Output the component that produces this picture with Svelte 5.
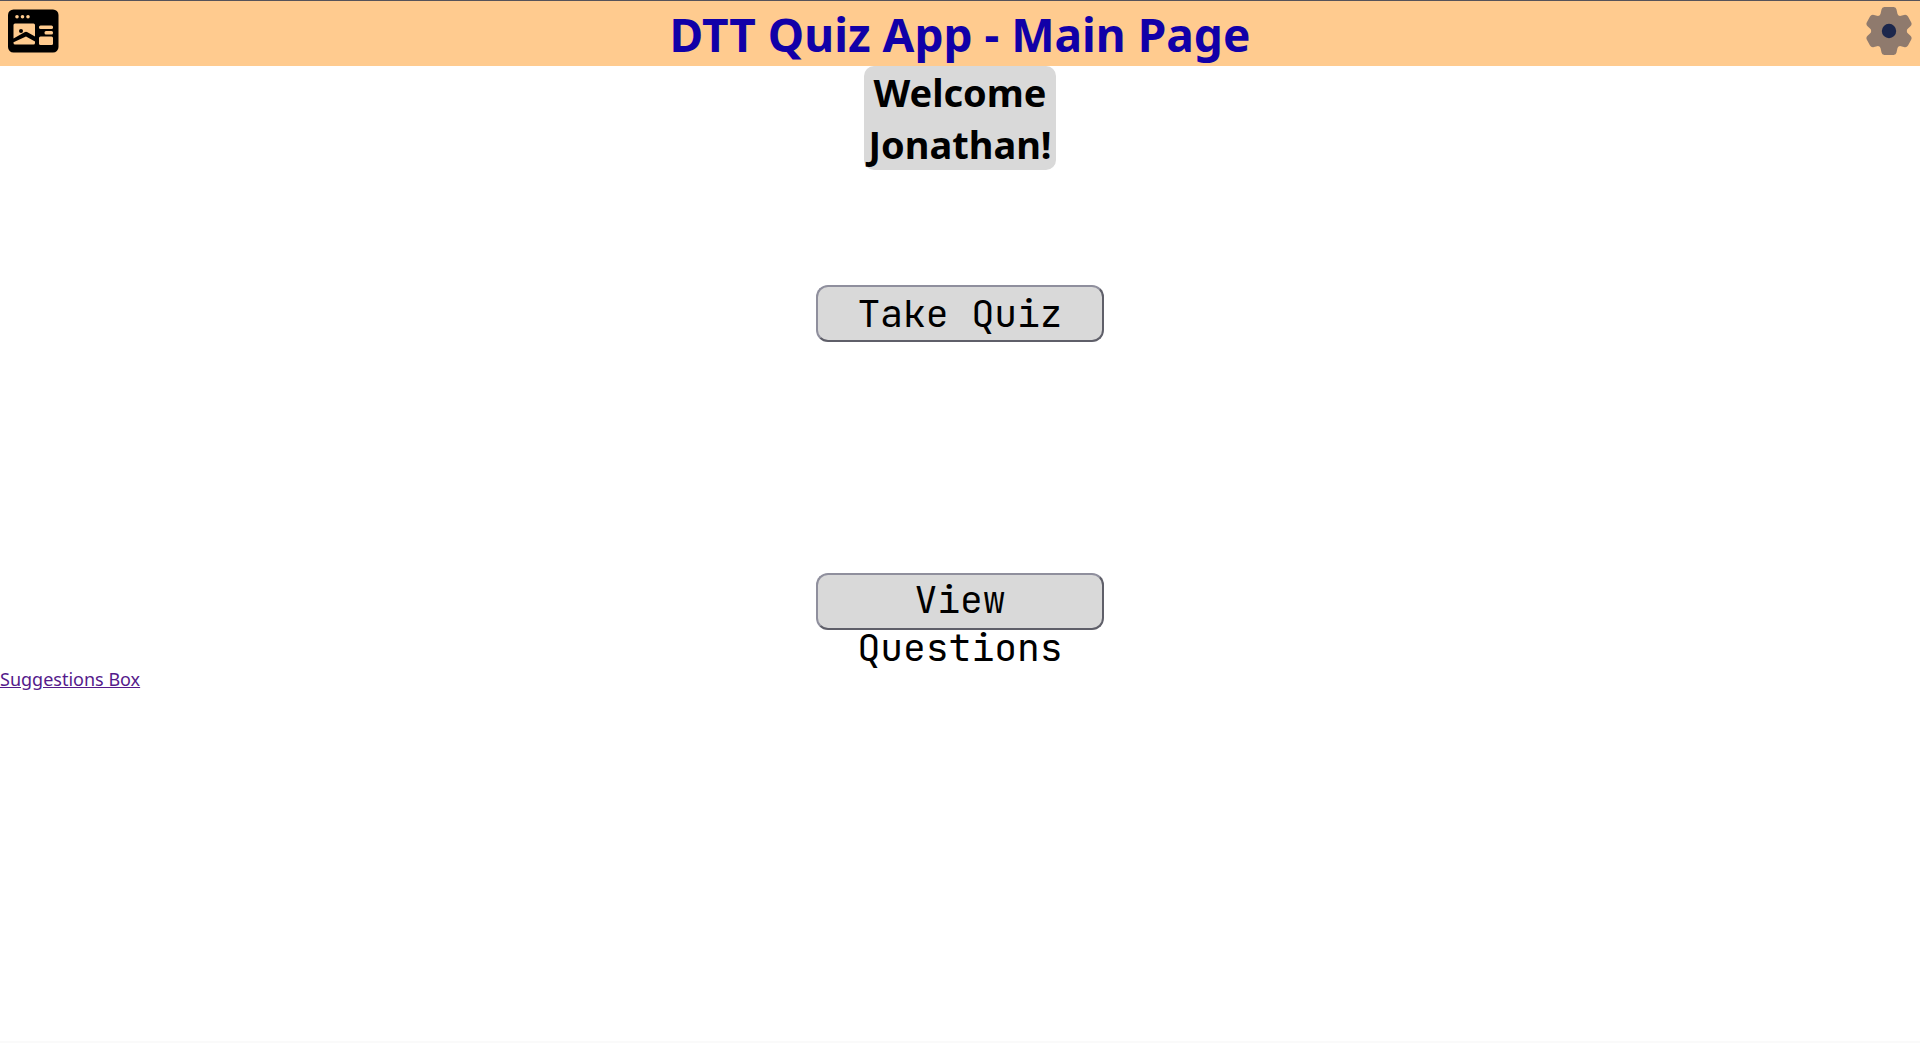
<script>
  let name = $state('Jonathan');
</script>

<div class="page">
  <header>
    <button class="icon" aria-label="Home">
      <svg width="52" height="44" viewBox="0 0 52 44">
        <rect x="0" y="0.5" width="50.5" height="43" rx="5.5" fill="#000" />
        <g fill="#ffcb8f">
          <circle cx="9" cy="7.7" r="1.8" />
          <circle cx="14.5" cy="7.7" r="1.8" />
          <circle cx="20" cy="7.7" r="1.8" />
          <path d="M7 14.5h18.500a1.500 1.500 0 0 1 1.500 1.500v11.500l-7.500-4.300a3 3 0 0 0-3 0L5.500 29.500V16a1.500 1.500 0 0 1 1.500-1.500z" />
          <path d="M18 27.500l9 5v1.500a1.500 1.500 0 0 1-1.500 1.500H7A1.500 1.500 0 0 1 5.500 34v-.7z" />
          <rect x="31" y="16.500" width="14" height="3.500" rx="1.500" />
          <rect x="36.500" y="22" width="8.500" height="3.500" rx="1.500" />
          <rect x="31" y="27.500" width="14" height="8.500" rx="1.500" />
        </g>
        <circle cx="13" cy="22" r="2" fill="#000" />
      </svg>
    </button>
    <h1>DTT Quiz App - Main Page</h1>
    <button class="icon" aria-label="Settings">
      <svg width="46" height="48" viewBox="0 0 46 48">
        <path
          fill="#8f7a6d"
          d="M18.500 0h9a3 3 0 0 1 3 2.500l1 4.500a3 3 0 0 0 3.500 1.800l3-.8a3.500 3.500 0 0 1 4 1.500l3 5.500a3.500 3.500 0 0 1-.8 4.500l-2.200 2a3.200 3.200 0 0 0 0 5l2.200 2a3.500 3.500 0 0 1 .8 4.500l-3 5.500a3.500 3.500 0 0 1-4 1.500l-3-.8a3 3 0 0 0-3.500 1.800l-1 4.500a3 3 0 0 1-3 2.500h-9a3 3 0 0 1-3-2.500l-1-4.500a3 3 0 0 0-3.500-1.800l-3 .8a3.500 3.500 0 0 1-4-1.500l-3-5.500a3.500 3.500 0 0 1 .8-4.500l2.200-2a3.200 3.200 0 0 0 0-5l-2.200-2a3.500 3.500 0 0 1-.8-4.500l3-5.500a3.500 3.500 0 0 1 4-1.500l3 .8a3 3 0 0 0 3.500-1.800l1-4.500a3 3 0 0 1 3-2.500z"
        />
        <circle cx="23" cy="24" r="7.200" fill="#1c274c" />
      </svg>
    </button>
  </header>
  <main>
    <h2>Welcome {name}!</h2>
    <button class="action">Take Quiz</button>
    <button class="action">View Questions</button>
  </main>
  <footer><a href="#suggestions">Suggestions Box</a></footer>
</div>

<style>
  :global(body) {
    margin: 0;
    background: #fff;
  }
  .page {
    box-sizing: border-box;
    min-height: 100vh;
    border-bottom: 2px solid #fafafa;
    font-family: 'Noto Sans', sans-serif;
    font-size: 18px;
    color: #000;
  }
  header {
    display: flex;
    justify-content: space-between;
    align-items: flex-start;
    padding: 0 8px;
    border-top: 1px solid #56535a;
    background: #ffcb8f;
  }
  .icon {
    display: flex;
    width: 52px;
    margin: 0;
    padding: 8px 0 0;
    border: 0;
    background: none;
    cursor: pointer;
  }
  .icon:last-child {
    justify-content: flex-end;
    padding-top: 6px;
  }
  h1 {
    margin: 0;
    padding-top: 2px;
    font-size: 46px;
    line-height: 63px;
    color: #1100a8;
  }
  main {
    display: flex;
    flex-direction: column;
    align-items: center;
  }
  h2 {
    width: 10%;
    margin: 0 0 115px;
    border-radius: 10px;
    background: #d9d9d9;
    font-size: 38px;
    line-height: 52px;
    text-align: center;
  }
  .action {
    box-sizing: border-box;
    display: flex;
    align-items: safe center;
    justify-content: center;
    width: 15%;
    height: 57px;
    margin: 0 0 231px;
    padding: 0 24px 2px;
    border: 2px solid;
    border-color: #8f8f9d #5f5f69 #5f5f69 #8f8f9d;
    border-radius: 12px;
    background: #d9d9d9;
    color: #000;
    font-family: 'JetBrains Mono', 'DejaVu Sans Mono', monospace;
    font-size: 38px;
    line-height: 48px;
    text-align: center;
    cursor: pointer;
  }
  .action:last-child {
    margin-bottom: 36px;
  }
  footer {
    line-height: 26px;
  }
  a {
    color: #551a8b;
  }
</style>
